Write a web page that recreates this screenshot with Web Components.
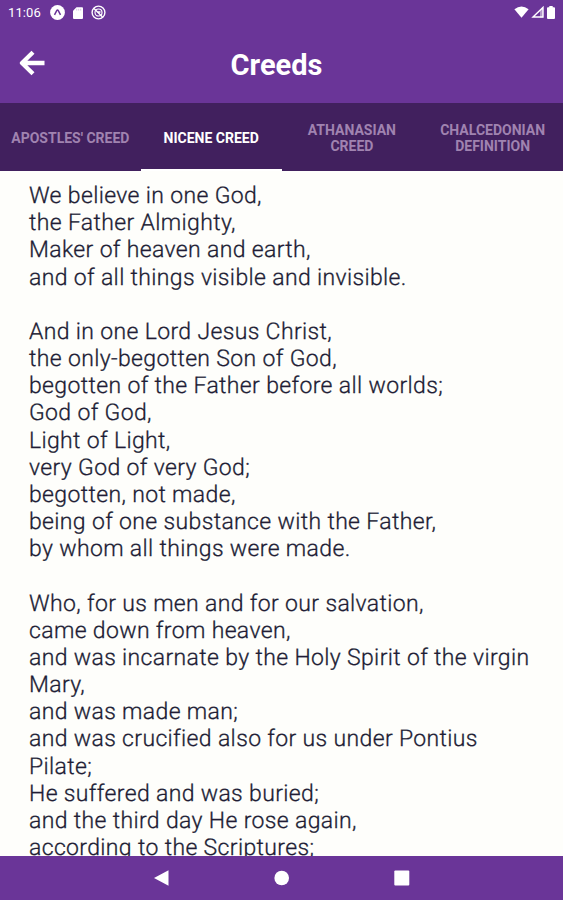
<!DOCTYPE html>
<html lang="en">
<head>
    <meta charset="UTF-8">
    <meta name="viewport" content="width=device-width, initial-scale=1.0">
    <title>Creeds</title>
    <style>
        html, body {
            margin: 0;
            height: 100%;
        }
        body {
            font-family: Roboto, "Liberation Sans", sans-serif;
            --purple: #6a3598;
            --dark: #41205e;
            overflow: hidden;
        }
    </style>
</head>
<body>
    <creeds-app></creeds-app>

    <template id="statusHtml">
        <style>
            :host {
                display: flex;
                align-items: center;
                flex: none;
                height: 25px;
                padding: 0 7px 0 8px;
                box-sizing: border-box;
                background: var(--purple);
                color: white;
                font-size: 13px;
            }
            svg { display: block; }
            .time { width: 42px; letter-spacing: 0.1px; }
            .left, .right { display: flex; align-items: center; }
            .left { gap: 7px; flex: 1; margin-top: -1px; }
            .right { gap: 1px; margin-top: -1px; }
            .wifi { margin-right: 1px; }
        </style>
        <span class="time">11:06</span>
        <div class="left">
            <svg width="15" height="15" viewBox="0 0 15 15">
                <circle cx="7.5" cy="7.5" r="7.4" fill="#fff"/>
                <path d="M4.500 9.800 6.700 5.600Q7.500 4.300 8.300 5.600L10.500 9.800" fill="none" stroke="#6a3598" stroke-width="1.5"/>
            </svg>
            <svg width="12" height="13" viewBox="0 0 12 13">
                <path d="M4.500 1.300H10q1 0 1 1V12q0 1-1 1H2q-1 0-1-1V4.800z" fill="#fff"/>
                <path d="M4.700 2.800v1.800M6.700 2.800v1.800M8.700 2.800v1.800" stroke="#cdb8de" stroke-width=".8"/>
            </svg>
            <svg width="15" height="15" viewBox="0 0 15 15" fill="none" stroke="#fff">
                <circle cx="7.5" cy="7.5" r="6.4" stroke-width="1.4"/>
                <circle cx="7.5" cy="7.5" r="3.5" stroke-width="1.2"/>
                <path d="M3 3.5 11.5 12M6 7h3.5" stroke-width="1.4"/>
            </svg>
        </div>
        <div class="right">
            <svg class="wifi" width="15" height="12" viewBox="0 0 15 12"><path d="M.4 3.2Q7.5-2.4 14.6 3.2L7.5 11.7z" fill="#fff"/></svg>
            <svg width="14" height="12" viewBox="0 0 14 12">
                <path d="M2 11 12 1.400V11z" fill="none" stroke="#fff" stroke-width="1.400"/>
                <path d="M9 4v7.500h3V1.500z" fill="#fff" opacity=".5"/>
            </svg>
            <svg width="10" height="13" viewBox="0 0 10 13"><path d="M3.300 0h3.400v1.300H8q1 0 1 1V12q0 1-1 1H2q-1 0-1-1V2.300q0-1 1-1h1.300z" fill="#fff"/></svg>
        </div>
    </template>

    <template id="headerHtml">
        <style>
            :host {
                display: grid;
                grid-template-columns: 64px 1fr 74px;
                align-items: center;
                flex: none;
                height: 78px;
                background: var(--purple);
                color: white;
            }
            svg { display: block; margin: -3px 0 0 19px; }
            h1 {
                margin: 2px 0 0;
                text-align: center;
                font-size: 29px;
                line-height: 34px;
                font-weight: 700;
            }
        </style>
        <svg width="28" height="28" viewBox="0 0 28 28" fill="none" stroke="#fff" stroke-width="4.300" stroke-linejoin="round">
            <path d="M25.500 14H4M14 3.300 3 14l11 10.700"/>
        </svg>
        <h1><slot></slot></h1>
    </template>

    <template id="tabHtml">
        <style>
            :host {
                display: flex;
                align-items: center;
                justify-content: center;
                flex: 1 1 0;
                min-width: 0;
                box-sizing: border-box;
                padding-top: 4px;
                border-bottom: 2px solid transparent;
                text-align: center;
                text-transform: uppercase;
                font-size: 14px;
                line-height: 16.5px;
                font-weight: 700;
                color: #a083b0;
            }
            :host([active]) {
                color: white;
                border-color: white;
            }
        </style>
        <span><slot></slot></span>
    </template>

    <template id="textHtml">
        <style>
            :host {
                display: block;
                flex: 1;
                min-height: 0;
                overflow: hidden;
                box-sizing: border-box;
                padding: 11px 28px 0 29px;
                background: #fefefb;
                color: #211d35;
                font-size: 23px;
                font-weight: 300;
                line-height: 27.17px;
                letter-spacing: 0.35px;
                text-rendering: geometricPrecision;
                /* a bit heavier than Light */
                -webkit-text-stroke: 0.3px;
            }
            p { margin: 0 0 27.17px; white-space: pre-line; }
        </style>
    </template>

    <template id="navHtml">
        <style>
            :host {
                display: flex;
                align-items: center;
                justify-content: center;
                gap: 104px;
                flex: none;
                height: 44px;
                background: var(--purple);
            }
            svg { display: block; }
        </style>
        <svg width="16" height="16" viewBox="0 0 16 16"><path d="M0 8 14.500 .2v15.600z" fill="#fff"/></svg>
        <svg width="16" height="16" viewBox="0 0 16 16"><circle cx="7.700" cy="8" r="7.300" fill="#fff"/></svg>
        <svg width="16" height="16" viewBox="0 0 16 16"><rect x=".3" y=".5" width="15" height="15" rx="1" fill="#fff"/></svg>
    </template>

    <template id="appHtml">
        <style>
            :host {
                display: flex;
                flex-direction: column;
                height: 100vh;
            }
            nav {
                display: flex;
                flex: none;
                height: 68px;
                background: var(--dark);
            }
        </style>
        <status-bar></status-bar>
        <app-header>Creeds</app-header>
        <nav>
            <creed-tab>Apostles' Creed</creed-tab>
            <creed-tab active>Nicene Creed</creed-tab>
            <creed-tab>Athanasian<br>Creed</creed-tab>
            <creed-tab>Chalcedonian<br>Definition</creed-tab>
        </nav>
        <creed-text></creed-text>
        <system-nav></system-nav>
    </template>

    <script>
        const nicene = [
`We believe in one God,
the Father Almighty,
Maker of heaven and earth,
and of all things visible and invisible.`,
`And in one Lord Jesus Christ,
the only-begotten Son of God,
begotten of the Father before all worlds;
God of God,
Light of Light,
very God of very God;
begotten, not made,
being of one substance with the Father,
by whom all things were made.`,
`Who, for us men and for our salvation,
came down from heaven,
and was incarnate by the Holy Spirit of the virgin Mary,
and was made man;
and was crucified also for us under Pontius Pilate;
He suffered and was buried;
and the third day He rose again,
according to the Scriptures;`
        ];

        // clones the template into an open shadow root
        class Base extends HTMLElement {
            constructor() {
                super();
                const tpl = document.getElementById(this.constructor.tpl);
                this.attachShadow({ mode: 'open' });
                this.shadowRoot.append(tpl.content.cloneNode(true));
            }
        }

        class StatusBar extends Base { static tpl = 'statusHtml'; }
        class AppHeader extends Base { static tpl = 'headerHtml'; }
        class CreedTab extends Base { static tpl = 'tabHtml'; }
        class SystemNav extends Base { static tpl = 'navHtml'; }
        class CreedsApp extends Base { static tpl = 'appHtml'; }

        class CreedText extends Base {
            static tpl = 'textHtml';
            connectedCallback() {
                nicene.forEach(verse => {
                    const p = document.createElement('p');
                    p.textContent = verse;
                    this.shadowRoot.append(p);
                });
            }
        }

        customElements.define('status-bar', StatusBar);
        customElements.define('app-header', AppHeader);
        customElements.define('creed-tab', CreedTab);
        customElements.define('creed-text', CreedText);
        customElements.define('system-nav', SystemNav);
        customElements.define('creeds-app', CreedsApp);
    </script>
</body>
</html>
